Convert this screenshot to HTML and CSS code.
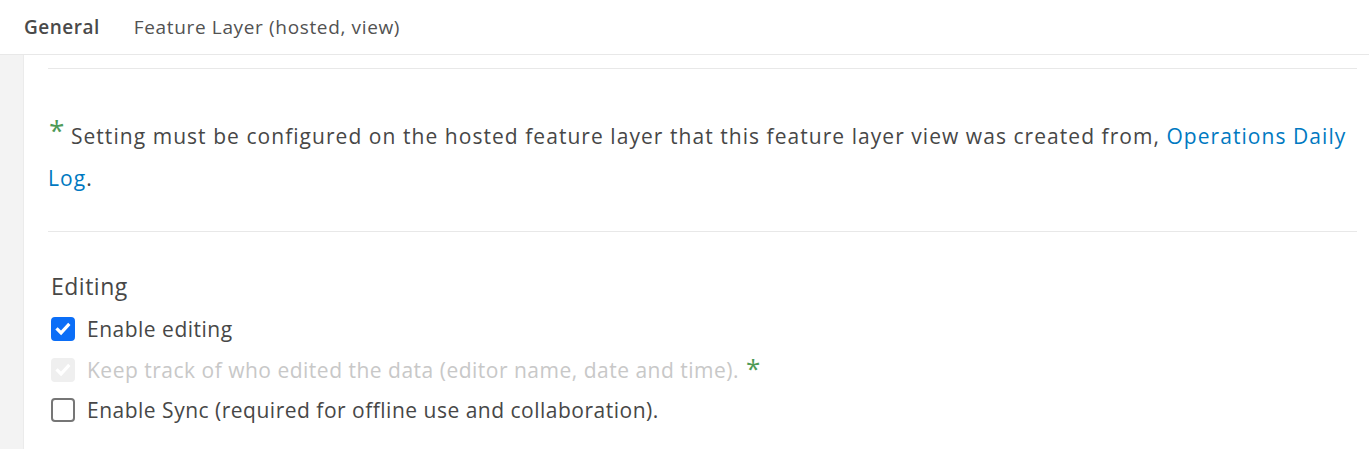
FILE: index.html
```html
<!DOCTYPE html>
<html lang="en">
<head>
<meta charset="utf-8">
<title>Feature Layer settings</title>
<link rel="stylesheet" href="styles.css">
</head>
<body>
<header class="header">
  <span class="tab tab-active">General</span>
  <span class="tab">Feature Layer (hosted, view)</span>
</header>
<div class="main">
  <div class="rail"></div>
  <div class="content">
    <hr class="divider divider-top">
    <p class="note"><span class="req">*</span> Setting must be configured on the hosted feature layer that this feature layer view was created from, <a class="link" href="#">Operations Daily Log</a>.</p>
    <hr class="divider">
    <h2 class="section-title">Editing</h2>
    <ul class="options">
      <li class="option">
        <span class="box box-checked"><svg viewBox="0 0 24 24" class="tick"><path d="M5.5 12.5l4.2 4.2 8.6-9.4" /></svg></span>
        <span class="label">Enable editing</span>
      </li>
      <li class="option option-disabled">
        <span class="box box-disabled"><svg viewBox="0 0 24 24" class="tick"><path d="M5.5 12.5l4.2 4.2 8.6-9.4" /></svg></span>
        <span class="label">Keep track of who edited the data (editor name, date and time). <span class="req req-inline">*</span></span>
      </li>
      <li class="option">
        <span class="box"></span>
        <span class="label">Enable Sync (required for offline use and collaboration).</span>
      </li>
    </ul>
  </div>
</div>
</body>
</html>
```

FILE: styles.css
```css
html, body {
  margin: 0;
  padding: 0;
  background: #ffffff;
}
body {
  font-family: "Open Sans", "Noto Sans", "Liberation Sans", sans-serif;
  color: #4a4a4a;
}
.header {
  height: 54px;
  border-bottom: 1px solid #e8e8e8;
  display: flex;
  align-items: center;
  padding-left: 24px;
  gap: 34px;
  box-sizing: content-box;
}
.tab {
  font-size: 19px;
  letter-spacing: 0.65px;
  color: #525252;
}
.tab-active {
  font-weight: 600;
  letter-spacing: 0.5px;
  color: #4a4a4a;
}
.main {
  display: flex;
  min-height: 394px;
}
.rail {
  width: 23px;
  background: #f3f3f3;
  border-right: 1px solid #ebebeb;
  flex: none;
}
.content {
  flex: 1;
  padding: 0 12px 0 24px;
}
.divider {
  border: 0;
  border-top: 1px solid #e8e8e8;
  margin: 0;
}
.divider-top {
  margin-top: 13px;
}
.note {
  margin: 46px 0 32px;
  font-size: 21px;
  letter-spacing: 1.05px;
  line-height: 42px;
  color: #474747;
}
.req {
  color: #4e9a57;
  font-size: 28px;
  vertical-align: top;
  line-height: 30px;
  margin-left: 1px;
  letter-spacing: 0;
}
.req-inline {
  font-size: 26px;
  line-height: 20px;
  vertical-align: 0;
}
.link {
  color: #0079c1;
  text-decoration: none;
}
.section-title {
  margin: 39px 0 0 3px;
  font-size: 23px;
  letter-spacing: 0.5px;
  line-height: 30px;
  font-weight: 400;
  color: #474747;
}
.options {
  list-style: none;
  margin: 8px 0 0;
  padding: 0;
}
.option {
  display: flex;
  align-items: center;
  gap: 12px;
  height: 40.5px;
  padding-left: 3px;
  font-size: 21px;
  letter-spacing: 0.5px;
  color: #474747;
}
.option-disabled .label {
  color: #c8c8c8;
}
.box {
  width: 24px;
  height: 24px;
  box-sizing: border-box;
  border: 2px solid #767676;
  border-radius: 4px;
  background: #fff;
  display: flex;
  align-items: center;
  justify-content: center;
  flex: none;
}
.box-checked {
  background: #0b6ef7;
  border-color: #0b6ef7;
}
.box-disabled {
  background: #efefef;
  border-color: #efefef;
}
.tick {
  width: 22px;
  height: 22px;
  fill: none;
  stroke: #ffffff;
  stroke-width: 3.8;
  stroke-linecap: square;
}
```
